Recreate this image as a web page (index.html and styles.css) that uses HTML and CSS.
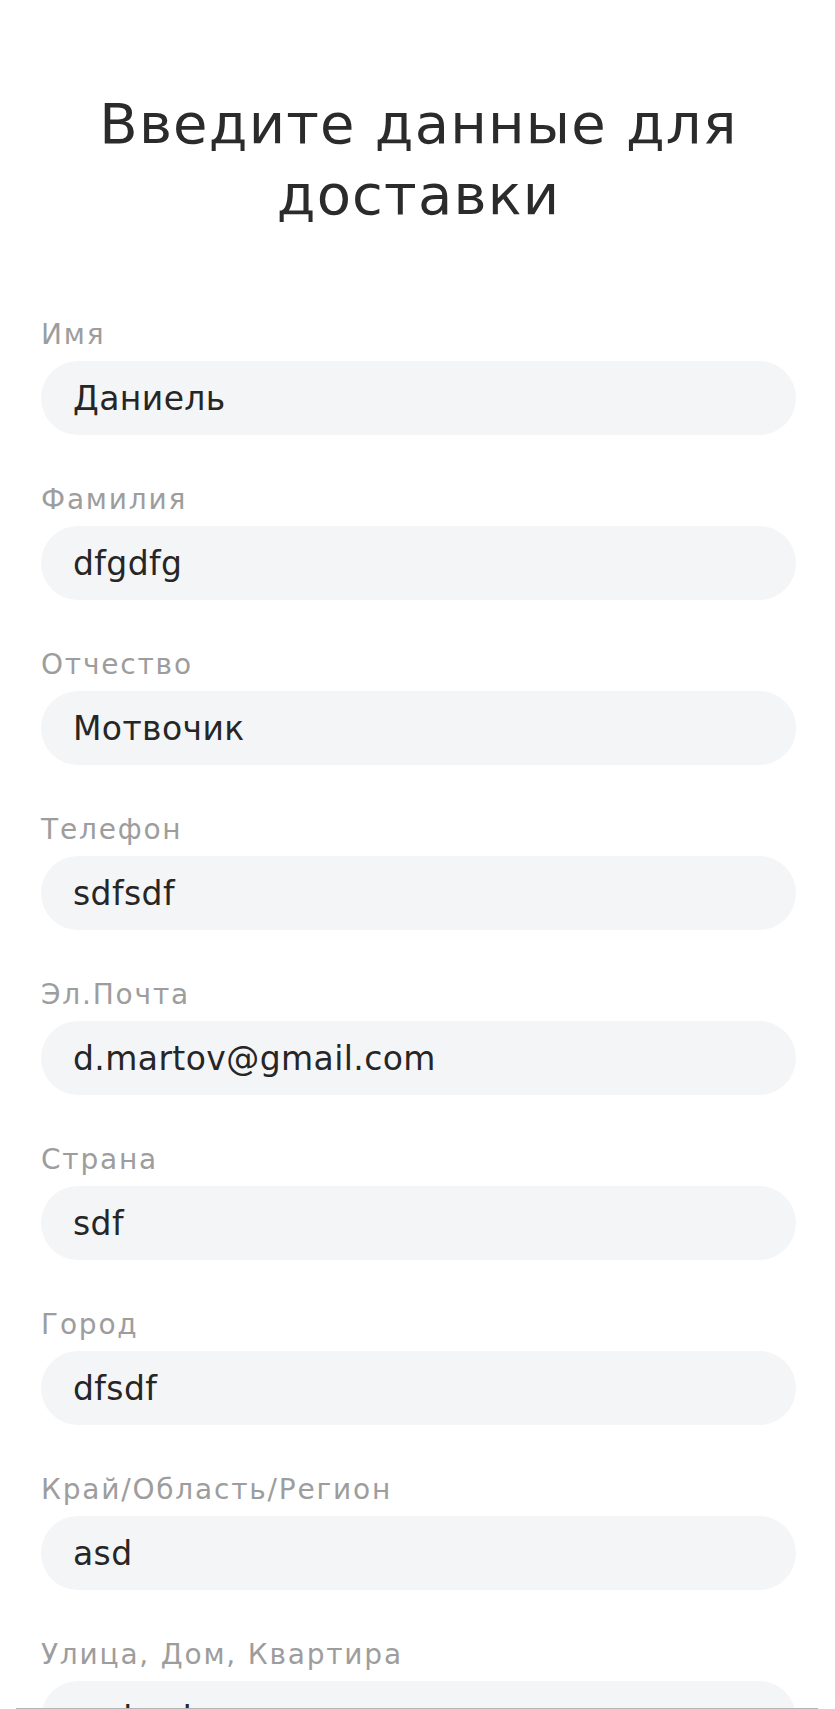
FILE: index.html
```html
<!DOCTYPE html>
<html lang="ru">
<head>
<meta charset="utf-8">
<title>Введите данные для доставки</title>
<link rel="stylesheet" href="styles.css">
</head>
<body>
<main class="page">
  <h1 class="title">Введите данные для доставки</h1>
  <form class="form">
    <label class="field"><span class="label">Имя</span><input class="input" type="text" value="Даниель"></label>
    <label class="field"><span class="label">Фамилия</span><input class="input" type="text" value="dfgdfg"></label>
    <label class="field"><span class="label">Отчество</span><input class="input" type="text" value="Мотвочик"></label>
    <label class="field"><span class="label">Телефон</span><input class="input" type="text" value="sdfsdf"></label>
    <label class="field"><span class="label">Эл.Почта</span><input class="input" type="text" value="d.martov@gmail.com"></label>
    <label class="field"><span class="label">Страна</span><input class="input" type="text" value="sdf"></label>
    <label class="field"><span class="label">Город</span><input class="input" type="text" value="dfsdf"></label>
    <label class="field"><span class="label">Край/Область/Регион</span><input class="input" type="text" value="asd"></label>
    <label class="field"><span class="label">Улица, Дом, Квартира</span><input class="input" type="text" value="asdasd"></label>
  </form>
</main>
<div class="bottom-edge"></div>
</body>
</html>
```
FILE: styles.css
```css
html, body {
  margin: 0;
  padding: 0;
  background: #ffffff;
}

body {
  font-family: "DejaVu Sans", "Liberation Sans", sans-serif;
  color: #262626;
}

.page {
  padding: 0 39px 0 41px;
}

.title {
  margin: 88px 0 0;
  font-size: 56px;
  line-height: 71px;
  font-weight: 400;
  letter-spacing: 1.2px;
  color: #2b2b2b;
  text-align: center;
}

.form {
  display: flex;
  flex-direction: column;
  gap: 48px;
  margin-top: 88px;
}

.field {
  display: flex;
  flex-direction: column;
  gap: 9px;
}

.label {
  font-size: 28px;
  line-height: 34px;
  letter-spacing: 1.8px;
  color: #9d9d9d;
}

.input {
  box-sizing: border-box;
  width: 100%;
  height: 74px;
  padding: 0 32px;
  border: none;
  outline: none;
  border-radius: 37px;
  background: #f4f5f7;
  font-family: "DejaVu Sans", "Liberation Sans", sans-serif;
  font-size: 33px;
  letter-spacing: 0.4px;
  color: #262626;
}

.bottom-edge {
  position: fixed;
  left: 16px;
  right: 17px;
  bottom: 0;
  height: 1px;
  background: #b5b5b5;
}
```
